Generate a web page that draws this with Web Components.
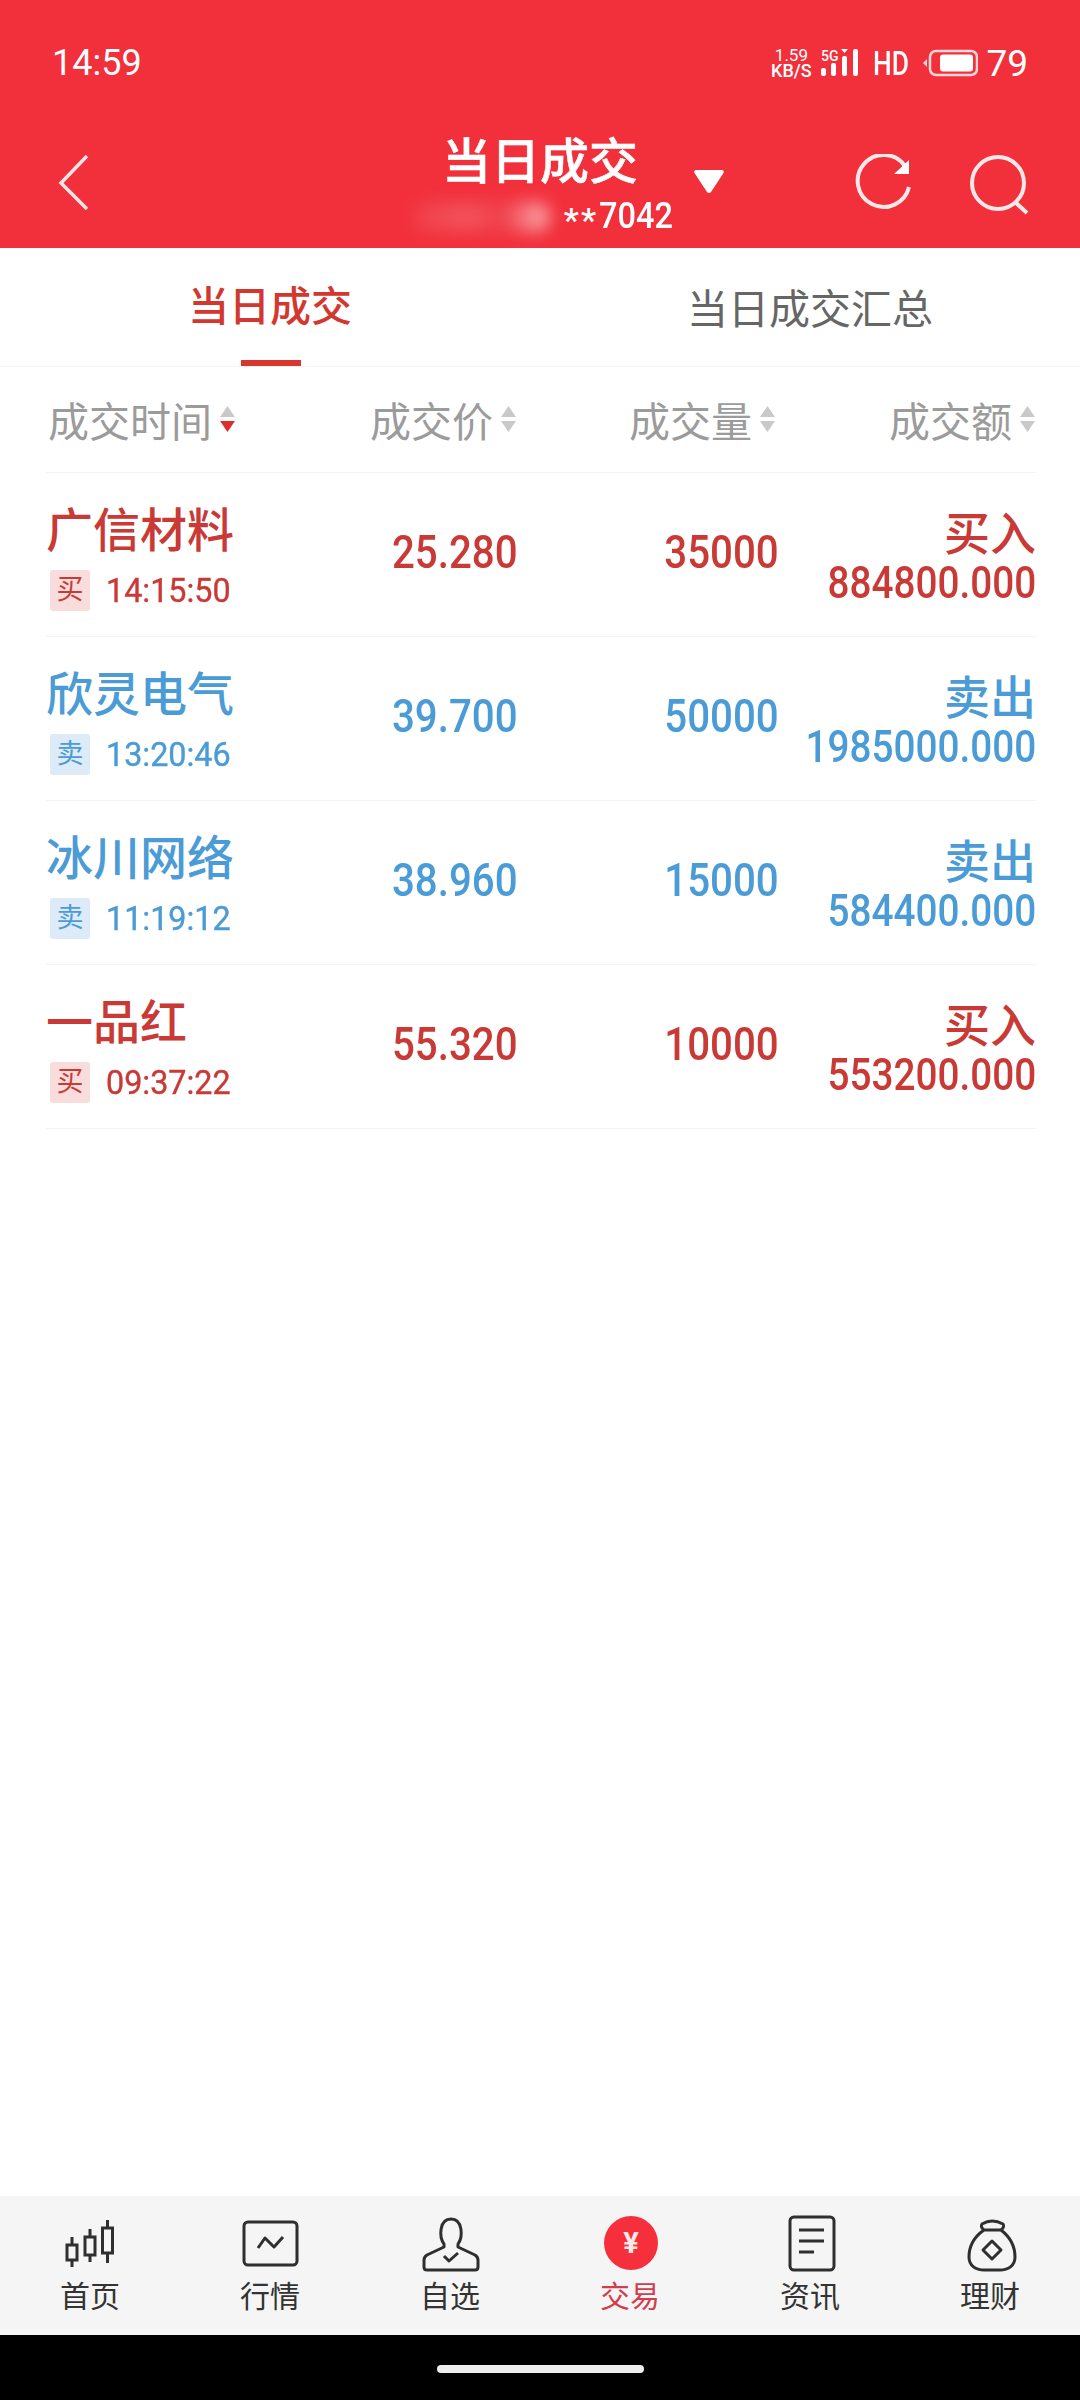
<!DOCTYPE html>
<html lang="zh">
<head>
<meta charset="utf-8">
<style>
    html, body { margin: 0; padding: 0; background: #fff; }
    body { font-family: Roboto, "Noto Sans CJK SC", sans-serif; }
    trade-app { width: 1080px; height: 2400px; }
</style>
</head>
<body>
<trade-app>
    <status-bar slot="head"></status-bar>
    <title-bar slot="head"></title-bar>
    <tab-bar slot="tabs"></tab-bar>
    <sort-header slot="list"></sort-header>
    <trade-row slot="list" side="buy" name="广信材料" time="14:15:50" price="25.280" qty="35000" amount="884800.000"></trade-row>
    <trade-row slot="list" side="sell" name="欣灵电气" time="13:20:46" price="39.700" qty="50000" amount="1985000.000"></trade-row>
    <trade-row slot="list" side="sell" name="冰川网络" time="11:19:12" price="38.960" qty="15000" amount="584400.000"></trade-row>
    <trade-row slot="list" side="buy" name="一品红" time="09:37:22" price="55.320" qty="10000" amount="553200.000"></trade-row>
    <bottom-nav slot="nav"></bottom-nav>
</trade-app>

<script>
class TradeApp extends HTMLElement {
    constructor() {
        super();
        this.attachShadow({mode: 'open'});
        this.shadowRoot.innerHTML = `
            <style>
                :host { display: flex; flex-direction: column; overflow: hidden; }
                .head { background: #f2303c; height: 248px; flex: none; }
                .list { flex: 1; background: #fff; padding: 0 44px 0 46px; }
                .home { background: #000; height: 65px; flex: none; display: flex; align-items: center; justify-content: center; }
                .pill { width: 207px; height: 8px; border-radius: 4px; background: #eee; margin-top: 2px; }
            </style>
            <div class="head"><slot name="head"></slot></div>
            <slot name="tabs"></slot>
            <div class="list"><slot name="list"></slot></div>
            <slot name="nav"></slot>
            <div class="home"><div class="pill"></div></div>
        `;
    }
}

class StatusBar extends HTMLElement {
    constructor() {
        super();
        this.attachShadow({mode: 'open'});
        this.shadowRoot.innerHTML = `
            <style>
                :host { display: flex; align-items: center; height: 126px; padding: 0 52px 0 52px; box-sizing: border-box; color: #fff; font-size: 36px; }
                .clock { flex: 1; }
                .speed { width: 42px; font-size: 17px; line-height: 15px; text-align: center; margin-right: 9px; }
                .speed b { display: block; font-weight: 500; font-size: 18px; }
                .hd { font-size: 33px; transform: scaleX(.8); width: 32px; margin: 0 17px 0 14px; transform-origin: left center; font-weight: 500; }
                .bat { margin: 0 8px 0 0; }
                .pct { font-size: 37px; }
                svg { display: block; }
            </style>
            <span class="clock">14:59</span>
            <div class="speed">1.59<b>KB/S</b></div>
            <svg width="38" height="30" viewBox="0 0 38 30">
                <text x="0" y="13" font-size="14" font-weight="500" fill="#fff" font-family="Roboto">5G</text>
                <rect x="0" y="20" width="5" height="8" rx="2" fill="#fff"/>
                <rect x="10" y="15" width="5" height="13" rx="2" fill="#fff"/>
                <rect x="21" y="8" width="5" height="20" rx="2" fill="#fff"/>
                <rect x="32" y="1" width="5" height="27" rx="2" fill="#fff"/>
                <path d="M20 1h7l-3.500 4z" fill="#fff"/>
            </svg>
            <span class="hd">HD</span>
            <svg class="bat" width="56" height="28" viewBox="0 0 56 28">
                <path d="M5 10v8L1 14z" fill="#fbd5d7"/>
                <rect x="8" y="2" width="47" height="24" rx="6" fill="none" stroke="#fbd5d7" stroke-width="2.500"/>
                <rect x="18" y="5.500" width="33" height="17" rx="3" fill="#fff"/>
            </svg>
            <span class="pct">79</span>
        `;
    }
}

class TitleBar extends HTMLElement {
    constructor() {
        super();
        this.attachShadow({mode: 'open'});
        this.shadowRoot.innerHTML = `
            <style>
                :host { display: grid; grid-template-columns: 390px 304px 386px; height: 122px; color: #fff; }
                .left { padding: 28px 0 0 58px; }
                .mid { display: flex; flex-direction: column; align-items: center; position: relative; }
                .title { font-size: 49px; font-weight: 500; line-height: 56px; margin-top: 9px; margin-left: -4px; -webkit-text-stroke: .5px #fff; }
                .sub { display: flex; align-items: center; gap: 1px; align-self: flex-end; margin-right: 21px; font-size: 37px; font-weight: 500; line-height: 40px; margin-top: 5px; }
                .star { font-size: 34px; letter-spacing: 2px; transform: translateY(4px); }
                .num { display: inline-block; transform: scaleX(.88); transform-origin: left center; width: 74px; }
                .smudge { position: absolute; left: 24px; top: 76px; width: 136px; height: 30px; border-radius: 14px; filter: blur(8px);
                    background: linear-gradient(90deg, #f0404a, #f2525c 40%, #ef3f4a 65%, #f8989e 92%); }
                .right { display: flex; align-items: flex-start; }
                .tri { margin-top: 44px; }
                svg { display: block; }
            </style>
            <div class="left">
                <svg width="32" height="56" viewBox="0 0 32 56"><path d="M29 2L3 29l26 26" fill="none" stroke="#fbe4e5" stroke-width="3.500"/></svg>
            </div>
            <div class="mid">
                <span class="title">当日成交</span>
                <div class="smudge"></div>
                <div class="sub"><span class="star">**</span><span class="num">7042</span></div>
            </div>
            <div class="right">
                <svg class="tri" width="30" height="24" viewBox="0 0 30 24"><path d="M2 0h26a2 2 0 0 1 1.500 3L17 22a2.500 2.500 0 0 1-4 0L.5 3A2 2 0 0 1 2 0z" fill="#fff"/></svg>
                <svg style="margin:28px 0 0 131px" width="60" height="62" viewBox="0 0 60 62">
                    <path d="M50 12A26 26 0 1 0 54 33" fill="none" stroke="#fde8e9" stroke-width="4"/>
                    <path d="M39 20l15 0 0-14z" fill="#fff"/>
                </svg>
                <svg style="margin:27px 0 0 53px" width="62" height="62" viewBox="0 0 62 62">
                    <circle cx="30" cy="30" r="26" fill="none" stroke="#fde8e9" stroke-width="4"/>
                    <path d="M47 49l12 11" fill="none" stroke="#fde8e9" stroke-width="4"/>
                </svg>
            </div>
        `;
    }
}

class TabBar extends HTMLElement {
    constructor() {
        super();
        this.attachShadow({mode: 'open'});
        this.shadowRoot.innerHTML = `
            <style>
                :host { display: grid; grid-template-columns: 1fr 1fr; height: 119px; box-sizing: border-box; border-bottom: 1px solid #f3f3f3; font-size: 41px; }
                .tab { text-align: center; line-height: 56px; color: #666; padding-top: 34px; position: relative; }
                .on { color: #d2382f; font-weight: 500; padding-top: 31px; }
                .on::after { content: ""; position: absolute; left: 241px; width: 60px; top: 112px; height: 6px; background: #d9362f; }
            </style>
            <div class="tab on">当日成交</div>
            <div class="tab">当日成交汇总</div>
        `;
    }
}

class SortHeader extends HTMLElement {
    constructor() {
        super();
        const arrows = (cls) => `<svg class="${cls}" width="17" height="28" viewBox="0 0 17 28">
                <path d="M8.500 1l7.500 11H1z" fill="#c9c9c9"/><path d="M1 16h15l-7.500 11z" fill="${cls === 'hot' ? '#dc2f2b' : '#c9c9c9'}"/></svg>`;
        this.attachShadow({mode: 'open'});
        this.shadowRoot.innerHTML = `
            <style>
                :host { display: grid; grid-template-columns: 190px 281px 259px 260px; height: 106px; box-sizing: border-box; border-bottom: 1px solid #f3f3f3; color: #9b9b9b; font-size: 41px; align-items: center; }
                div { display: flex; align-items: center; justify-content: flex-end; gap: 7px; padding-bottom: 1px; }
                svg { display: block; }
            </style>
            <div>成交时间${arrows('hot')}</div>
            <div>成交价${arrows('')}</div>
            <div>成交量${arrows('')}</div>
            <div>成交额${arrows('')}</div>
        `;
    }
}

class TradeRow extends HTMLElement {
    connectedCallback() {
        const buy = this.getAttribute('side') === 'buy';
        const get = (k) => this.getAttribute(k);
        this.attachShadow({mode: 'open'});
        this.shadowRoot.innerHTML = `
            <style>
                :host { display: grid; grid-template-columns: 212px 260px 261px 257px; height: 164px; box-sizing: border-box; border-bottom: 1px solid #f3f3f3; align-items: center; color: ${buy ? '#c93a36' : '#4a9bd6'}; font-weight: 500; }
                .name { font-size: 47px; line-height: 58px; margin-top: 4px; white-space: nowrap; }
                .sub { display: flex; align-items: center; margin-top: 10px; }
                .tag { width: 40px; height: 41px; margin-left: 4px; border-radius: 3px; background: ${buy ? '#f9dcdc' : '#dcebf7'}; font-size: 27px; font-weight: 400; line-height: 41px; text-align: center; }
                .time { font-size: 34px; line-height: 41px; display: inline-block; margin-left: 16px; transform: scaleX(.95); transform-origin: left center; white-space: nowrap; font-weight: 400; -webkit-text-stroke: .4px currentColor; }
                .cell { text-align: right; font-size: 46px; margin-top: -6px; }
                .num { display: inline-block; transform: scaleX(.875); transform-origin: right center; white-space: nowrap; }
                .amt { text-align: right; }
                .side { font-size: 46px; line-height: 44px; margin-top: 4px; }
                .total { font-size: 44px; line-height: 38px; margin-top: 8px; display: flex; justify-content: flex-end; }
                .total .num { transform: scaleX(.88); }
            </style>
            <div>
                <div class="name">${get('name')}</div>
                <div class="sub"><span class="tag">${buy ? '买' : '卖'}</span><span class="time">${get('time')}</span></div>
            </div>
            <div class="cell"><span class="num">${get('price')}</span></div>
            <div class="cell"><span class="num">${get('qty')}</span></div>
            <div class="amt">
                <div class="side">${buy ? '买入' : '卖出'}</div>
                <div class="total"><span class="num">${get('amount')}</span></div>
            </div>
        `;
    }
}

class BottomNav extends HTMLElement {
    constructor() {
        super();
        const stroke = 'fill="none" stroke="#2f2f2f" stroke-width="3" stroke-linejoin="round"';
        const items = [
            ['首页', `<path d="M12 22v30M30 14v33M47.500 5v43" ${stroke}/><rect x="7" y="30" width="10" height="15" fill="#f5f5f5" stroke="#2f2f2f" stroke-width="3"/><rect x="25" y="22" width="10" height="18" fill="#f5f5f5" stroke="#2f2f2f" stroke-width="3"/><rect x="42.500" y="13" width="10" height="25" fill="#f5f5f5" stroke="#2f2f2f" stroke-width="3"/>`],
            ['行情', `<rect x="4" y="7" width="53" height="43" rx="4" ${stroke}/><path d="M18 33l7-10 9 9 9-10" ${stroke}/>`],
            ['自选', `<path d="M24 29C19 22 19 4 31 4S43 22 38 29v3l17 8q3 2 3 5v7q0 3-3 3H7q-3 0-3-3v-7q0-3 3-5l17-8z" ${stroke}/><path d="M24 41l5 5 9-8" ${stroke}/>`],
            ['交易', `<circle cx="31" cy="28" r="27" fill="#f5303c"/><text x="31" y="38" text-anchor="middle" font-size="29" font-weight="700" fill="#fbe9ea" font-family="Roboto">¥</text>`],
            ['资讯', `<rect x="10" y="2" width="44" height="53" rx="4" ${stroke}/><path d="M19 15h25M19 26h25M19 37h15" ${stroke}/>`],
            ['理财', `<path d="M22 9q10-6 21 0 2 3-2 6H24q-4-3-2-6zM24 15C14 22 9 32 9 42c0 9 7 13 15 13h16c8 0 15-4 15-13 0-10-5-20-14-27" ${stroke}/><path d="M32 26l9 9-9 9-9-9z" ${stroke}/>`]
        ];
        this.attachShadow({mode: 'open'});
        this.shadowRoot.innerHTML = `
            <style>
                :host { display: grid; grid-template-columns: repeat(6, 1fr); height: 139px; background: #f5f5f5; color: #333; font-size: 30px; }
                div { display: flex; flex-direction: column; align-items: center; padding-top: 19px; }
                svg { display: block; }
                span { line-height: 40px; margin-top: 2px; }
                .on { color: #d23c4f; }
            </style>
            ${items.map(([label, icon], i) => `<div class="${i === 3 ? 'on' : ''}"><svg width="60" height="60" viewBox="0 0 60 60">${icon}</svg><span>${label}</span></div>`).join('')}
        `;
    }
}

customElements.define('trade-app', TradeApp);
customElements.define('status-bar', StatusBar);
customElements.define('title-bar', TitleBar);
customElements.define('tab-bar', TabBar);
customElements.define('sort-header', SortHeader);
customElements.define('trade-row', TradeRow);
customElements.define('bottom-nav', BottomNav);
</script>
</body>
</html>
